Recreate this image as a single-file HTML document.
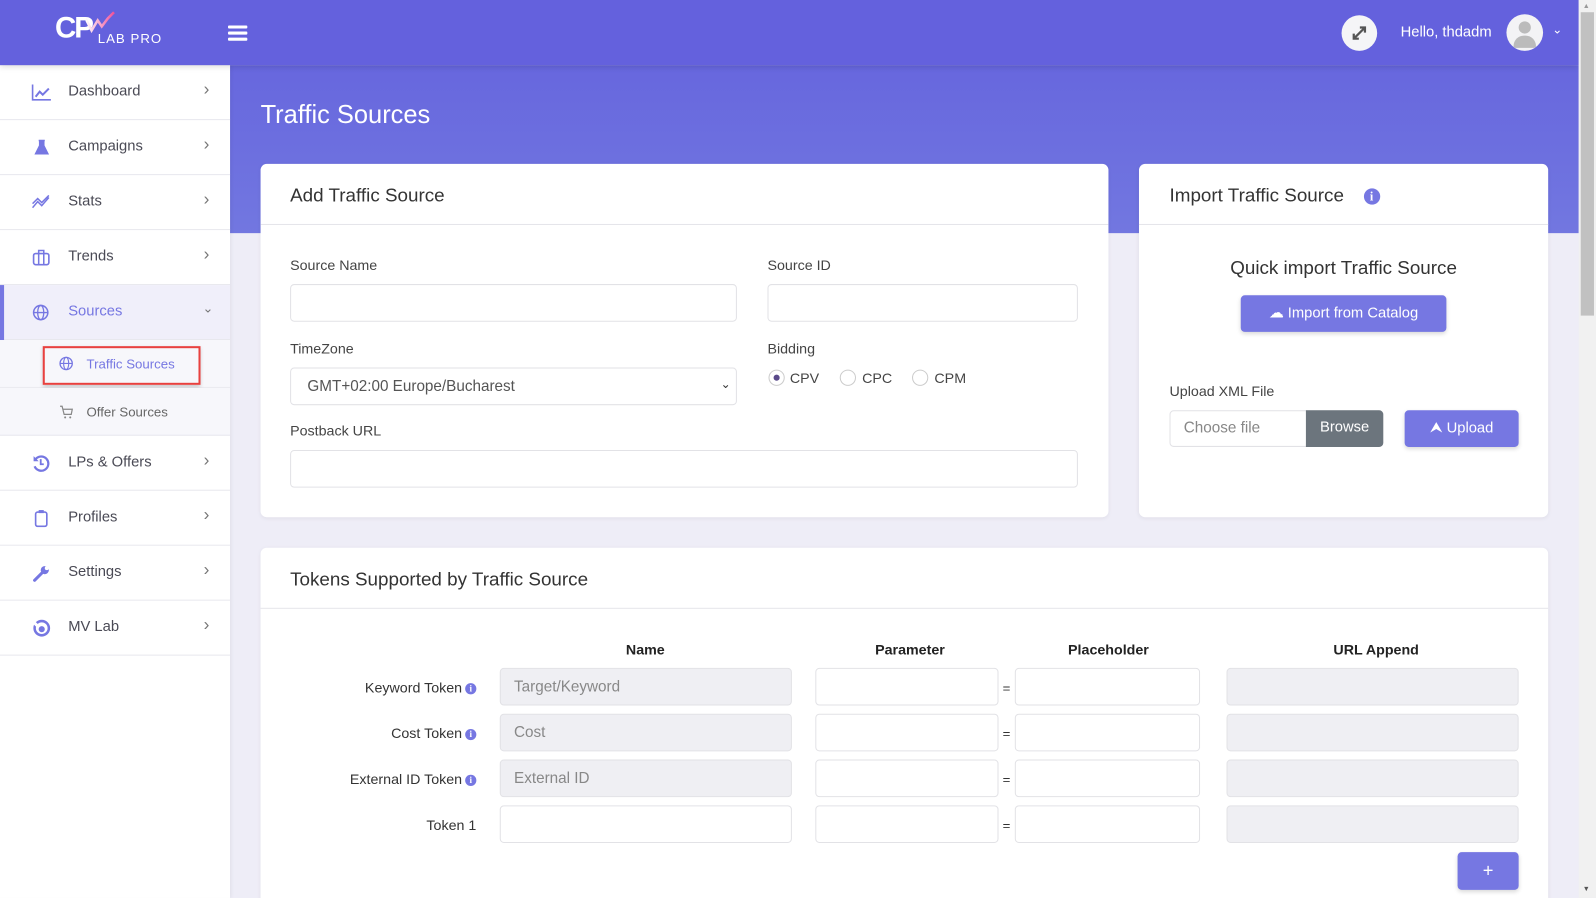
<!DOCTYPE html>
<html><head><meta charset="utf-8"><style>
*{box-sizing:border-box;margin:0;padding:0}
html,body{width:1596px;height:898px;overflow:hidden;background:#eeedf7;font-family:"Liberation Sans",sans-serif}
#w{position:absolute;left:0;top:0;width:1568px;height:882px;transform:scale(1.01786,1.0181);transform-origin:0 0;background:#eeedf7;overflow:hidden}
.a{position:absolute}
.hdr{left:0;top:0;width:1551px;height:64px;background:#6461dd;box-shadow:0 2px 6px rgba(0,0,0,.15);z-index:3}
.band{left:226px;top:64px;width:1325px;height:165px;background:linear-gradient(180deg,#6767de,#7277e0)}
.side{left:0;top:64px;width:226px;height:818px;background:#fff;z-index:2;box-shadow:1px 0 4px rgba(0,0,0,.08)}
.nav{position:absolute;left:0;width:226px;height:54px;border-bottom:1px solid #e8e8ee;font-size:14.5px;color:#4a4a55}
.nav .t{position:absolute;left:67px;top:18px}
.nav .c{position:absolute;left:200px;top:14px;color:#777;font-size:17px}
.nav svg{position:absolute;left:31px;top:18px}
.card{background:#fff;border-radius:6px;box-shadow:0 1px 4px rgba(0,0,0,.06)}
.ct{position:absolute;font-size:18.5px;color:#333}
.hl{position:absolute;left:0;right:0;height:1px;background:#e5e5ea}
.lb{position:absolute;font-size:14px;color:#444}
.in{position:absolute;border:1px solid #e2e2e6;border-radius:4px;background:#fff;height:37px}
.g{background:#efeff3}
.btn{position:absolute;background:#7677e2;color:#fff;border-radius:4px;font-size:14.5px;text-align:center;box-shadow:0 2px 4px rgba(0,0,0,.15)}
.th{position:absolute;top:630px;font-size:14px;font-weight:bold;color:#222;transform:translateX(-50%)}
.rl{position:absolute;right:1100px;font-size:14px;color:#333;white-space:nowrap}
.ii{display:inline-block;width:11px;height:11px;border-radius:50%;background:#7677e2;color:#fff;font-size:9px;font-weight:bold;text-align:center;line-height:11px;vertical-align:1px;margin-left:3px;font-family:"Liberation Serif",serif}
.ph{position:absolute;left:13px;top:9px;font-size:15px;color:#888}
.eq{position:absolute;left:985px;font-size:13px;color:#333}
.rad{position:absolute;top:363px;width:16px;height:16px;border:1px solid #ccc;border-radius:50%}
</style></head><body><div id="w">
<div class="a band"></div>
<div class="a hdr">
 <div class="a" style="left:54px;top:13px;color:#fff;font-size:29px;font-weight:bold;letter-spacing:-2px;line-height:30px">CP</div>
 <svg class="a" style="left:84px;top:10px" width="30" height="24"><path d="M0 8 L6 20 L12 10 L16 16 L22 8 L28 2" stroke="url(#lg)" stroke-width="2.5" fill="none"/><defs><linearGradient id="lg"><stop offset="0" stop-color="#fff"/><stop offset="1" stop-color="#f0509a"/></linearGradient></defs></svg>
 <div class="a" style="left:96px;top:30px;color:#fff;font-size:13px;letter-spacing:1px">LAB PRO</div>
 <div class="a" style="left:224px;top:25px;width:19px;height:3px;background:#fff;box-shadow:0 6px 0 #fff,0 12px 0 #fff;border-radius:1px"></div>
 <div class="a" style="left:1318px;top:15px;width:35px;height:35px;border-radius:50%;background:#f5f5f7"></div>
 <svg class="a" style="left:1327px;top:24px" width="17" height="17"><path d="M3 14 L14 3 M9 3 H14 V8 M3 9 V14 H8" stroke="#555" stroke-width="2.2" fill="none"/></svg>
 <div class="a" style="left:1376px;top:24px;color:#fff;font-size:14.5px">Hello, thdadm</div>
 <div class="a" style="left:1480px;top:14px;width:36px;height:36px;border-radius:50%;background:#f3f3f5;overflow:hidden"><div class="a" style="left:12px;top:7px;width:12px;height:12px;border-radius:50%;background:#bbb"></div><div class="a" style="left:7px;top:21px;width:22px;height:12px;border-radius:11px 11px 2px 2px;background:#bbb"></div></div>
 <div class="a" style="left:1525px;top:22px;color:#fff;font-size:12px">&#8964;</div>
</div>
<div class="a side">
 <div class="nav" style="top:0"><svg width="20" height="18"><path d="M1 1V16H19" stroke="#7677e2" stroke-width="1.6" fill="none"/><path d="M4 13L8 8 11 11 17 5" stroke="#7677e2" stroke-width="2" fill="none"/></svg><span class="t">Dashboard</span><span class="c">›</span></div>
 <div class="nav" style="top:54px"><svg width="20" height="18"><path d="M7 2H13M8 2V7L4 15H16L12 7V2" fill="#7677e2" stroke="#7677e2" stroke-width="1.5"/></svg><span class="t">Campaigns</span><span class="c">›</span></div>
 <div class="nav" style="top:108px"><svg width="20" height="18"><path d="M1 14L6 8 10 12 17 4M1 10L6 5 10 9 17 2" stroke="#7677e2" stroke-width="1.5" fill="none"/></svg><span class="t">Stats</span><span class="c">›</span></div>
 <div class="nav" style="top:162px"><svg width="20" height="18"><rect x="2" y="5" width="15" height="11" rx="2" stroke="#7677e2" stroke-width="1.6" fill="none"/><path d="M7 5V2H12V5M7 5V16M12 5V16" stroke="#7677e2" stroke-width="1.5" fill="none"/></svg><span class="t">Trends</span><span class="c">›</span></div>
 <div class="nav" style="top:216px;background:#f0effa"><div class="a" style="left:0;top:0;width:4px;height:54px;background:#7677e2"></div><svg width="20" height="18"><circle cx="9" cy="9" r="7" stroke="#7677e2" stroke-width="1.5" fill="none"/><ellipse cx="9" cy="9" rx="3" ry="7" stroke="#7677e2" stroke-width="1.3" fill="none"/><path d="M2 9H16" stroke="#7677e2" stroke-width="1.3"/></svg><span class="t" style="color:#7677e2">Sources</span><span class="c" style="left:199px;top:15px;font-size:13px">&#8964;</span></div>
 <div class="nav" style="top:270px;height:47px;background:#f7f7fb"><svg style="left:58px;top:16px" width="16" height="16"><circle cx="7" cy="7" r="6" stroke="#7677e2" stroke-width="1.3" fill="none"/><ellipse cx="7" cy="7" rx="2.5" ry="6" stroke="#7677e2" stroke-width="1.1" fill="none"/><path d="M1 7H13" stroke="#7677e2" stroke-width="1.1"/></svg><span class="t" style="left:85px;top:16px;font-size:13px;color:#7677e2">Traffic Sources</span>
  <div class="a" style="left:42px;top:6px;width:155px;height:38px;border:2px solid #e8413f;box-shadow:0 2px 4px rgba(0,0,0,.2)"></div></div>
 <div class="nav" style="top:317px;height:47px;background:#f7f7fb"><svg style="left:58px;top:16px" width="16" height="16"><path d="M1 2H3L5 10H12L13 5H4" stroke="#888" stroke-width="1.2" fill="none"/><circle cx="6" cy="13" r="1" fill="#888"/><circle cx="11" cy="13" r="1" fill="#888"/></svg><span class="t" style="left:85px;top:16px;font-size:13px;color:#666">Offer Sources</span></div>
 <div class="nav" style="top:364px"><svg width="20" height="18"><path d="M4 5A7 7 0 1 1 3 12" stroke="#7677e2" stroke-width="2.2" fill="none"/><path d="M2 2V7H7" fill="#7677e2"/><path d="M9 5V10H12" stroke="#7677e2" stroke-width="1.8" fill="none"/></svg><span class="t">LPs &amp; Offers</span><span class="c">›</span></div>
 <div class="nav" style="top:418px"><svg width="20" height="18"><rect x="4" y="3" width="11" height="14" rx="2" stroke="#7677e2" stroke-width="1.6" fill="none"/><rect x="7" y="1" width="5" height="3" fill="#7677e2"/></svg><span class="t">Profiles</span><span class="c">›</span></div>
 <div class="nav" style="top:472px"><svg width="20" height="18"><path d="M3 16L10 9" stroke="#7677e2" stroke-width="3" stroke-linecap="round"/><circle cx="13" cy="6" r="4" fill="#7677e2"/><circle cx="15" cy="4" r="2" fill="#fff"/></svg><span class="t">Settings</span><span class="c">›</span></div>
 <div class="nav" style="top:526px"><svg width="20" height="18"><circle cx="10" cy="9" r="7" stroke="#7677e2" stroke-width="2.5" fill="none"/><circle cx="10" cy="10" r="3" fill="#7677e2"/><path d="M2 3L6 7" stroke="#fff" stroke-width="3"/></svg><span class="t">MV Lab</span><span class="c">›</span></div>
</div>
<div class="a" style="left:256px;top:99px;font-size:25px;color:#fff">Traffic Sources</div>
<div class="a card" style="left:256px;top:161px;width:833px;height:347px"></div>
<div class="ct" style="left:285px;top:181px">Add Traffic Source</div>
<div class="hl" style="left:256px;right:auto;width:833px;top:220px"></div>
<div class="lb" style="left:285px;top:252px">Source Name</div>
<div class="in" style="left:285px;top:279px;width:439px"></div>
<div class="lb" style="left:754px;top:252px">Source ID</div>
<div class="in" style="left:754px;top:279px;width:305px"></div>
<div class="lb" style="left:285px;top:334px">TimeZone</div>
<div class="in" style="left:285px;top:361px;width:439px"><span class="ph" style="left:16px;color:#555">GMT+02:00 Europe/Bucharest</span><span class="a" style="left:422px;top:8px;font-size:12px;color:#333">&#8964;</span></div>
<div class="lb" style="left:754px;top:334px">Bidding</div>
<div class="rad" style="left:755px"><div class="a" style="left:4px;top:4px;width:6px;height:6px;border-radius:50%;background:#5a4a8a"></div></div>
<div class="lb" style="left:776px;top:363px">CPV</div>
<div class="rad" style="left:825px"></div><div class="lb" style="left:847px;top:363px">CPC</div>
<div class="rad" style="left:896px"></div><div class="lb" style="left:918px;top:363px">CPM</div>
<div class="lb" style="left:285px;top:415px">Postback URL</div>
<div class="in" style="left:285px;top:442px;width:774px"></div>

<div class="a card" style="left:1119px;top:161px;width:402px;height:347px"></div>
<div class="ct" style="left:1149px;top:181px">Import Traffic Source <span class="ii" style="width:16px;height:16px;line-height:16px;font-size:12px;margin-left:14px;vertical-align:1px">i</span></div>
<div class="hl" style="left:1119px;right:auto;width:402px;top:220px"></div>
<div class="ct" style="left:1119px;width:402px;text-align:center;top:252px">Quick import Traffic Source</div>
<div class="btn" style="left:1219px;top:290px;width:202px;height:36px;line-height:36px">&#9729; Import from Catalog</div>
<div class="lb" style="left:1149px;top:376px">Upload XML File</div>
<div class="in" style="left:1149px;top:403px;width:210px;height:36px"><span class="ph" style="top:8px">Choose file</span><div class="a" style="left:133px;top:-1px;width:76px;height:36px;background:#6c757d;color:#fff;font-size:14.5px;text-align:center;line-height:34px;border-radius:0 4px 4px 0">Browse</div></div>
<div class="btn" style="left:1380px;top:403px;width:112px;height:36px;line-height:37px">&#11165; Upload</div>

<div class="a card" style="left:256px;top:538px;width:1265px;height:360px"></div>
<div class="ct" style="left:285px;top:558px">Tokens Supported by Traffic Source</div>
<div class="hl" style="left:256px;right:auto;width:1265px;top:597px"></div>
<div class="th" style="left:634px">Name</div>
<div class="th" style="left:894px">Parameter</div>
<div class="th" style="left:1089px">Placeholder</div>
<div class="th" style="left:1352px">URL Append</div>

<div class="rl" style="top:667px">Keyword Token<span class="ii">i</span></div>
<div class="in g" style="left:491px;top:656px;width:287px"><span class="ph">Target/Keyword</span></div>
<div class="rl" style="top:712px">Cost Token<span class="ii">i</span></div>
<div class="in g" style="left:491px;top:701px;width:287px"><span class="ph">Cost</span></div>
<div class="rl" style="top:757px">External ID Token<span class="ii">i</span></div>
<div class="in g" style="left:491px;top:746px;width:287px"><span class="ph">External ID</span></div>
<div class="rl" style="top:802px;right:1100px">Token 1</div>
<div class="in" style="left:491px;top:791px;width:287px"></div>

<div class="in" style="left:801px;top:656px;width:180px"></div><div class="eq" style="top:668px">=</div><div class="in" style="left:997px;top:656px;width:182px"></div><div class="in g" style="left:1205px;top:656px;width:287px"></div>
<div class="in" style="left:801px;top:701px;width:180px"></div><div class="eq" style="top:713px">=</div><div class="in" style="left:997px;top:701px;width:182px"></div><div class="in g" style="left:1205px;top:701px;width:287px"></div>
<div class="in" style="left:801px;top:746px;width:180px"></div><div class="eq" style="top:758px">=</div><div class="in" style="left:997px;top:746px;width:182px"></div><div class="in g" style="left:1205px;top:746px;width:287px"></div>
<div class="in" style="left:801px;top:791px;width:180px"></div><div class="eq" style="top:803px">=</div><div class="in" style="left:997px;top:791px;width:182px"></div><div class="in g" style="left:1205px;top:791px;width:287px"></div>
<div class="btn" style="left:1432px;top:837px;width:60px;height:37px;line-height:37px;font-size:18px">+</div>

<div class="a" style="left:1551px;top:0;width:17px;height:882px;background:#f1f1f1;z-index:5">
 <div class="a" style="left:2px;top:12px;width:13px;height:298px;background:#c1c1c1"></div>
 <div class="a" style="left:4px;top:3px;font-size:7px;color:#999">&#9650;</div>
 <div class="a" style="left:4px;top:870px;font-size:7px;color:#555">&#9660;</div>
</div>
</div></body></html>
